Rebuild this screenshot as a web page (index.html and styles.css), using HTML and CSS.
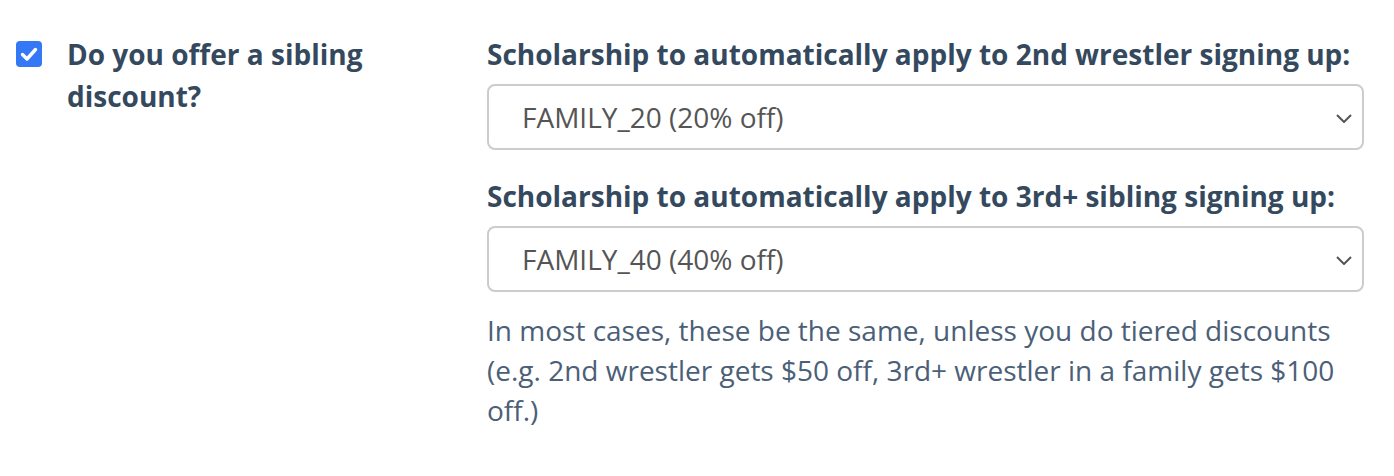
FILE: index.html
```html
<!DOCTYPE html>
<html>
<head>
<meta charset="utf-8">
<link rel="stylesheet" href="styles.css">
</head>
<body>
<div class="row">
  <div class="left">
    <span class="check">
      <svg viewBox="0 0 26 26" width="26" height="26"><rect x="0" y="0" width="26" height="26" rx="4" fill="#3478f6"/><path d="M6.5 13.5 L11 18 L19.5 8.5" fill="none" stroke="#fff" stroke-width="3.4" stroke-linecap="round" stroke-linejoin="round"/></svg>
    </span>
    <div class="question">Do you offer a sibling discount?</div>
  </div>
  <div class="right">
    <div class="field">
      <div class="label">Scholarship to automatically apply to 2nd wrestler signing up:</div>
      <div class="select"><span>FAMILY_20 (20% off)</span><svg class="chev" viewBox="0 0 16 9" width="16" height="9"><path d="M1 1 L8 8 L15 1" fill="none" stroke="#555" stroke-width="2"/></svg></div>
    </div>
    <div class="field">
      <div class="label">Scholarship to automatically apply to 3rd+ sibling signing up:</div>
      <div class="select"><span>FAMILY_40 (40% off)</span><svg class="chev" viewBox="0 0 16 9" width="16" height="9"><path d="M1 1 L8 8 L15 1" fill="none" stroke="#555" stroke-width="2"/></svg></div>
    </div>
    <p class="help">In most cases, these be the same, unless you do tiered discounts (e.g. 2nd wrestler gets $50 off, 3rd+ wrestler in a family gets $100 off.)</p>
  </div>
</div>
</body>
</html>
```
FILE: styles.css
```css
html, body { margin: 0; padding: 0; background: #fff; }
body { font-family: "Open Sans", "Noto Sans", sans-serif; }
.row { display: flex; padding: 33px 0 0 16px; }
.left { display: flex; align-items: flex-start; width: 471px; flex: none; }
.check { display: block; width: 26px; height: 26px; margin-top: 8px; margin-right: 25px; flex: none; }
.check svg { display: block; }
.question { font-weight: 700; font-size: 28px; line-height: 42px; color: #34495e; width: 330px; }
.right { width: 877px; }
.field { margin-bottom: 25px; }
.field:last-of-type { margin-bottom: 0; }
.label { font-weight: 700; font-size: 28px; line-height: 42px; color: #34495e; white-space: nowrap; margin-bottom: 9px; }
.select { height: 62px; border: 2px solid #ccc; border-radius: 8px; display: flex; align-items: center; justify-content: space-between; padding: 0 10px 0 33px; font-size: 28px; color: #555; }
.chev { margin-top: 2px; }
.help { margin: 18px 0 0; font-size: 28px; line-height: 40px; color: #4b6078; }
```
